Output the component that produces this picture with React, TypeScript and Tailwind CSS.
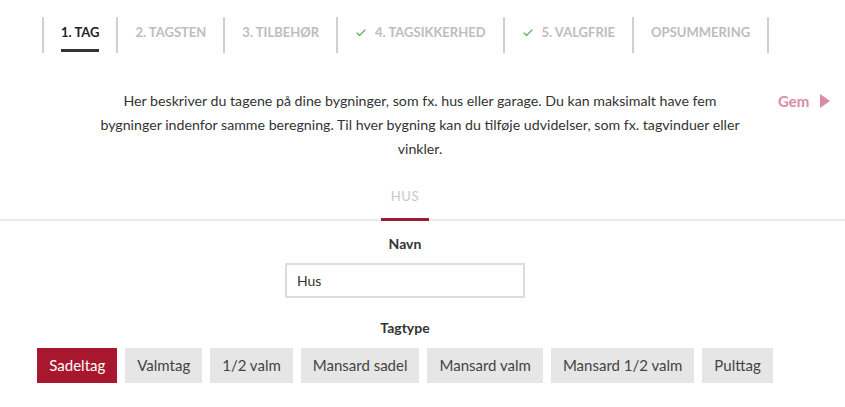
import React from 'react';
import { Check } from 'lucide-react';

const steps = [
  { label: '1. TAG', active: true, done: false },
  { label: '2. TAGSTEN', active: false, done: false },
  { label: '3. TILBEHØR', active: false, done: false },
  { label: '4. TAGSIKKERHED', active: false, done: true },
  { label: '5. VALGFRIE', active: false, done: true },
  { label: 'OPSUMMERING', active: false, done: false },
];

const roofTypes = ['Sadeltag', 'Valmtag', '1/2 valm', 'Mansard sadel', 'Mansard valm', 'Mansard 1/2 valm', 'Pulttag'];

const App = () => {
  return (
    <div className="w-[845px] h-[407px] bg-white overflow-hidden font-['Lato',sans-serif] text-[#333]">
      {/* step navigation */}
      <nav className="flex pl-[42px] pt-[17px]">
        <div className="w-[2px] h-9 bg-[#d0d0d0]" />
        {steps.map((step) => (
          <React.Fragment key={step.label}>
            <div className="relative flex items-center h-9 pb-1 px-[17px]">
              {step.done && <Check className="w-3 h-3 mr-2 text-[#5cb85c]" strokeWidth={2.5} />}
              <span
                className={`text-[13px] font-bold ${
                  step.active ? 'text-[#222]' : 'text-[#bdbdbd]'
                }`}
              >
                {step.label}
              </span>
              {step.active && <div className="absolute left-[17px] right-[17px] bottom-[1px] h-[3px] bg-[#333]" />}
            </div>
            <div className="w-[2px] h-9 bg-[#d0d0d0]" />
          </React.Fragment>
        ))}
      </nav>

      {/* intro */}
      <div className="grid grid-cols-[90px_660px_1fr] mt-9">
        <div />
        <p className="text-[14.2px] leading-6 text-center text-[#333]">
          Her beskriver du tagene på dine bygninger, som fx. hus eller garage. Du kan maksimalt have fem
          <br />
          bygninger indenfor samme beregning. Til hver bygning kan du tilføje udvidelser, som fx. tagvinduer eller
          <br />
          vinkler.
        </p>
        <div className="pl-7">
          <button className="flex items-center gap-[11px] h-6 text-[15px] font-bold text-[#d98ba3]">
            Gem
            <svg width="10" height="14" viewBox="0 0 10 14">
              <path d="M0 0 L10 7 L0 14 Z" fill="#d98ba3" />
            </svg>
          </button>
        </div>
      </div>

      {/* building tabs */}
      <div className="mt-[25px] border-b-2 border-[#ebebeb]">
        <div className="flex justify-center w-[810px]">
          <div className="px-[10px] pb-3 -mb-[2px] border-b-[3px] border-[#9b1b30]">
            <span className="block text-[13px] leading-5 tracking-[0.05em] text-[#c8c8c8]">HUS</span>
          </div>
        </div>
      </div>

      {/* form */}
      <div className="flex flex-col items-center w-[810px]">
        <label className="mt-[13px] text-[14px] leading-5 font-bold text-[#333]">Navn</label>
        <input
          defaultValue="Hus"
          className="mt-[9px] w-[240px] h-[35px] border-2 border-[#dcdcdc] px-[10px] text-[14px] text-[#333] outline-none"
        />
        <div className="mt-5 text-[14px] leading-5 font-bold text-[#333]">Tagtype</div>
        <div className="mt-[10px] flex gap-2">
          {roofTypes.map((type, i) => (
            <button
              key={type}
              className={`h-[35px] px-3 text-[15px] ${
                i === 0 ? 'bg-[#a8172e] text-white' : 'bg-[#e6e6e6] text-[#444]'
              }`}
            >
              {type}
            </button>
          ))}
        </div>
      </div>
    </div>
  );
};

export default App;
